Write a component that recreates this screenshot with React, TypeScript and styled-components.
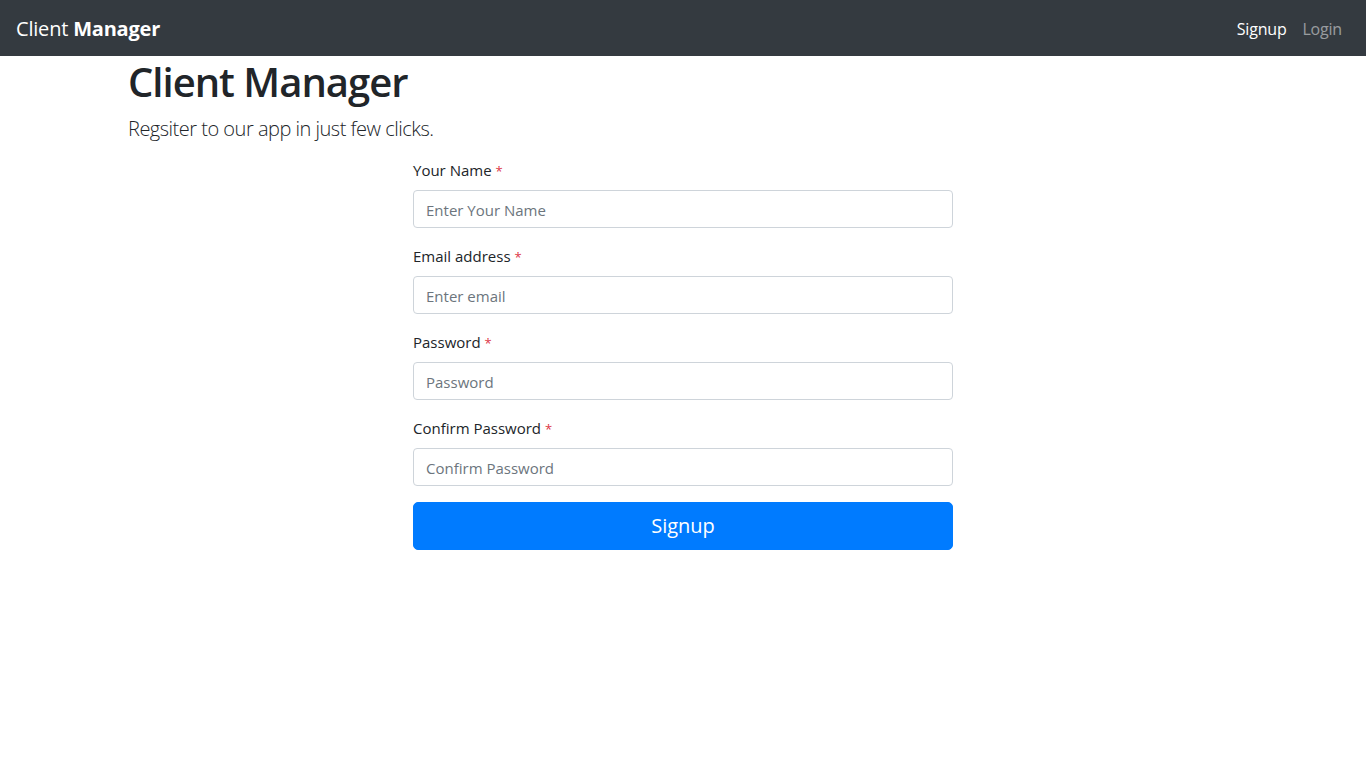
import React from "react";
import styled, { createGlobalStyle } from "styled-components";

const Global = createGlobalStyle`
  * { box-sizing: border-box; }
  body {
    margin: 0;
    font-family: "Open Sans", "Noto Sans", "Liberation Sans", sans-serif;
    font-size: 16px;
    line-height: 1.5;
    color: #212529;
    background: #fff;
  }
`;

const Navbar = styled.nav`
  height: 56px;
  background: #343a40;
  display: flex;
  align-items: center;
  justify-content: space-between;
  padding: 9px 16px 7px;
`;

const Brand = styled.a`
  color: #fff;
  font-size: 20px;
  line-height: 30px;
  text-decoration: none;
  letter-spacing: -0.2px;
  b { font-weight: 700; }
`;

const NavList = styled.div`
  display: flex;
`;

const NavLink = styled.a<{ $active?: boolean }>`
  color: ${(p) => (p.$active ? "#fff" : "rgba(255,255,255,0.5)")};
  padding: 8px;
  text-decoration: none;
  font-size: 16px;
  letter-spacing: -0.2px;
`;

const Container = styled.main`
  max-width: 1140px;
  margin: 0 auto;
  padding: 1px 15px 0;
`;

const Title = styled.h1`
  font-size: 40px;
  font-weight: 600;
  line-height: 1.2;
  letter-spacing: -1px;
  margin: 1px 0 8px;
`;

const Lead = styled.p`
  font-size: 20px;
  font-weight: 300;
  line-height: 30px;
  letter-spacing: -0.5px;
  margin: 0 0 14px;
`;

const Form = styled.form`
  width: 540px;
  margin-left: 285px;
`;

const Group = styled.div`
  margin-bottom: 16px;
`;

const Label = styled.label`
  display: block;
  margin-bottom: 8px;
  font-size: 15px;
  line-height: 24px;
  height: 24px;
`;

const Req = styled.span`
  color: #dc3545;
  font-size: 13px;
  line-height: 1;
`;

const Input = styled.input`
  display: block;
  width: 100%;
  height: 38px;
  padding: 7px 12px 5px;
  font-family: inherit;
  font-size: 15px;
  line-height: 24px;
  color: #495057;
  border: 1px solid #ced4da;
  border-radius: 4px;
  outline: none;
  &::placeholder { color: #6c757d; }
`;

const Button = styled.button`
  display: block;
  width: 100%;
  height: 48px;
  background: #007bff;
  color: #fff;
  border: 1px solid #007bff;
  border-radius: 5px;
  font-family: inherit;
  font-size: 20px;
  line-height: 30px;
  cursor: pointer;
`;

const fields = [
  { label: "Your Name", ph: "Enter Your Name", type: "text" },
  { label: "Email address", ph: "Enter email", type: "email" },
  { label: "Password", ph: "Password", type: "password" },
  { label: "Confirm Password", ph: "Confirm Password", type: "password" },
];

export default function App() {
  return (
    <>
      <Global />
      <Navbar>
        <Brand href="#">
          Client <b>Manager</b>
        </Brand>
        <NavList>
          <NavLink $active href="#">Signup</NavLink>
          <NavLink href="#">Login</NavLink>
        </NavList>
      </Navbar>
      <Container>
        <Title>Client Manager</Title>
        <Lead>Regsiter to our app in just few clicks.</Lead>
        <Form onSubmit={(e) => e.preventDefault()}>
          {fields.map((f) => (
            <Group key={f.label}>
              <Label>
                {f.label} <Req>*</Req>
              </Label>
              <Input type={f.type} placeholder={f.ph} />
            </Group>
          ))}
          <Button type="submit">Signup</Button>
        </Form>
      </Container>
    </>
  );
}
